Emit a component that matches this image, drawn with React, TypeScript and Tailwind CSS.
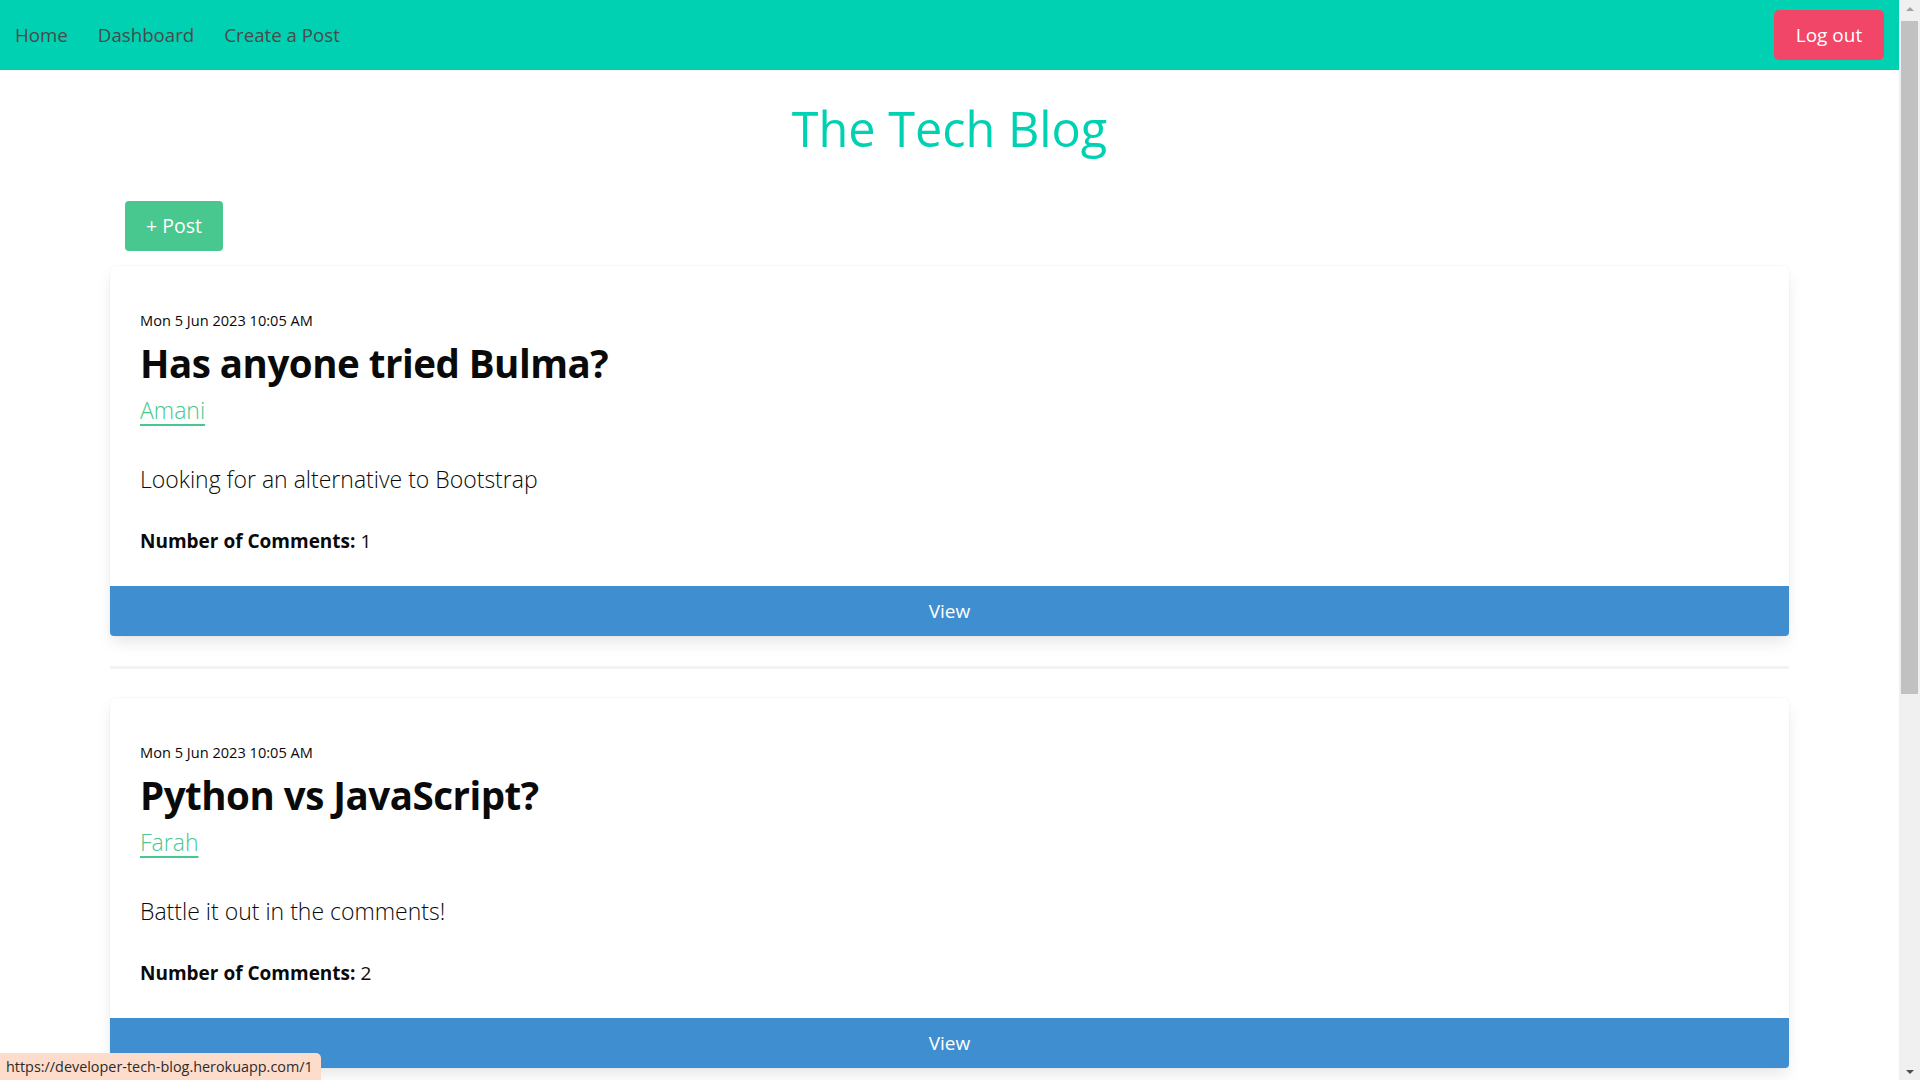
const posts = [
  {
    id: 1,
    date: "Mon 5 Jun 2023 10:05 AM",
    title: "Has anyone tried Bulma?",
    author: "Amani",
    body: "Looking for an alternative to Bootstrap",
    comments: 1,
  },
  {
    id: 2,
    date: "Mon 5 Jun 2023 10:05 AM",
    title: "Python vs JavaScript?",
    author: "Farah",
    body: "Battle it out in the comments!",
    comments: 2,
  },
  {
    id: 3,
    date: "Mon 5 Jun 2023 10:05 AM",
    title: "Tailwind or plain CSS?",
    author: "Amani",
    body: "Which one do you reach for first?",
    comments: 0,
  },
];

const font = { fontFamily: '"Open Sans", "Noto Sans", sans-serif' };

const PostCard = ({ post }: { post: (typeof posts)[number] }) => {
  return (
    <div>
      <div className="rounded-md bg-white shadow-[0_8px_16px_-2px_rgba(10,10,10,0.1),0_0_0_1px_rgba(10,10,10,0.02)]">
        <div className="px-[30px] pt-[44px] pb-[31px]">
          {/* date */}
          <p className="text-[14.6px] leading-[20px] text-[#0a0a0a]">{post.date}</p>
          {/* title */}
          <h2 className="mt-[8px] text-[38.5px] font-bold leading-[50px] text-[#0a0a0a] tracking-[-0.5px]">
            {post.title}
          </h2>
          <a
            href="#"
            className="mt-[5px] inline-block text-[23px] font-light leading-[34px] text-[#48c78e] underline decoration-[2px] underline-offset-[5px]"
          >
            {post.author}
          </a>
          <p className="mt-[35px] text-[23px] font-light leading-[34px] text-[#0a0a0a]">{post.body}</p>
          <p className="mt-[31px] text-[19px] leading-[28px] text-[#0a0a0a]">
            <span className="font-bold">Number of Comments:</span> {post.comments}
          </p>
        </div>
        <button className="flex h-[50px] w-full items-center justify-center rounded-b-[4px] bg-[#3e8ed0] text-[19px] text-white">
          View
        </button>
      </div>
      <hr className="mt-[30px] mb-[29px] h-[3px] border-0 bg-[#f3f3f3]" />
    </div>
  );
};

const Scrollbar = () => (
  <div className="flex h-screen w-[21px] shrink-0 flex-col items-center bg-[#f0f0f0]">
    <div className="flex h-[17px] w-full items-center justify-center">
      <div className="h-0 w-0 border-x-[4px] border-b-[4px] border-x-transparent border-b-[#a3a3a3]" />
    </div>
    <div className="mt-[4px] h-[673px] w-full px-[2px]">
      <div className="h-full w-full bg-[#c1c1c1]" />
    </div>
    <div className="flex-1" />
    <div className="flex h-[17px] w-full items-center justify-center">
      <div className="h-0 w-0 border-x-[4px] border-t-[4px] border-x-transparent border-t-[#505050]" />
    </div>
  </div>
);

export default function App() {
  return (
    <div className="relative flex h-screen overflow-hidden bg-white" style={font}>
      <div className="min-w-0 flex-1 overflow-hidden">
        {/* navbar */}
        <nav className="flex h-[70px] items-center justify-between bg-[#00d1b2] pr-[15px]">
          <div className="flex items-center">
            <a href="#" className="px-[15px] text-[18.7px] text-[#4a4a4a]">Home</a>
            <a href="#" className="px-[15px] text-[18.7px] text-[#4a4a4a]">Dashboard</a>
            <a href="#" className="px-[15px] text-[18.7px] text-[#4a4a4a]">Create a Post</a>
          </div>
          <button className="flex h-[50px] w-[110px] items-center justify-center rounded-[5px] bg-[#f14668] text-[19px] text-white">
            Log out
          </button>
        </nav>

        <h1 className="mt-[22px] text-center text-[48.6px] leading-[72px] text-[#00d1b2]">The Tech Blog</h1>

        <div className="px-[110px]">
          <div className="mt-[37px] mb-[15px] pl-[15px]">
            <button className="flex h-[50px] w-[98px] items-center justify-center rounded-[4px] bg-[#48c78e] text-[19.5px] text-white">
              + Post
            </button>
          </div>
          {posts.map((p) => (
            <PostCard key={p.id} post={p} />
          ))}
        </div>
      </div>

      <Scrollbar />

      {/* link preview bubble */}
      <div className="absolute bottom-0 left-0 flex h-[27px] items-center rounded-tr-[5px] bg-[#fddccb] pl-[6px] pr-[8px] text-[14.4px] text-[#2b2b2b]">
        https://developer-tech-blog.herokuapp.com/1
      </div>
    </div>
  );
}
